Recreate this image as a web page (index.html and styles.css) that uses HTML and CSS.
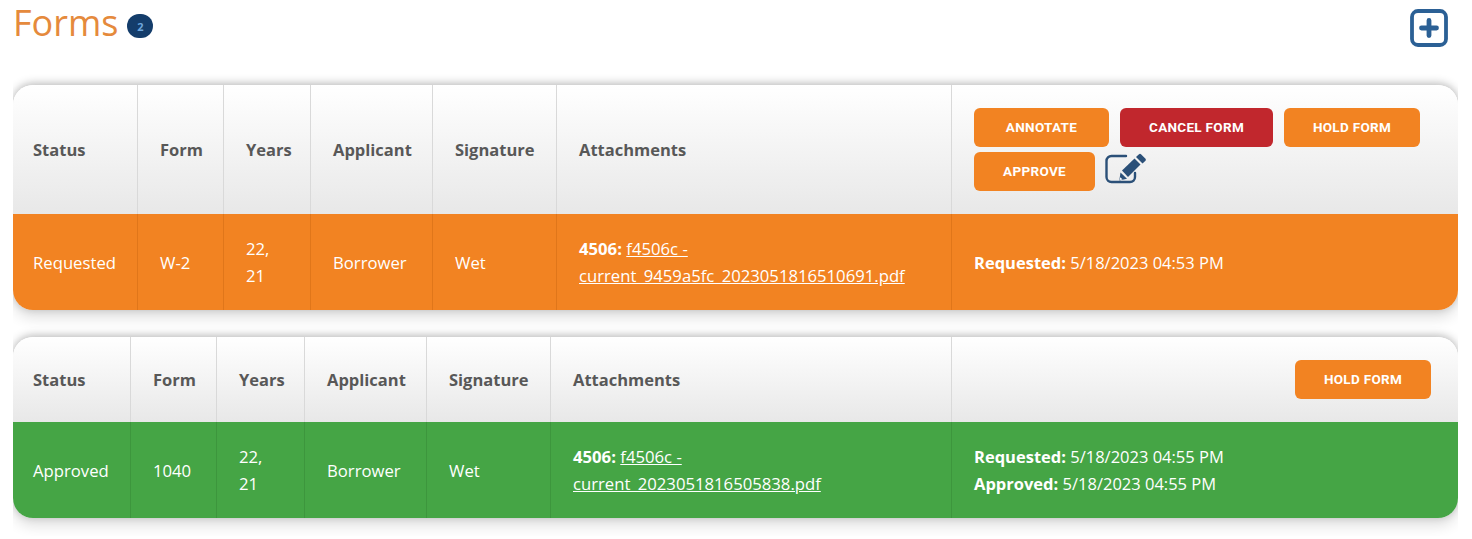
FILE: index.html
```html
<!DOCTYPE html>
<html lang="en">
<head>
<meta charset="utf-8">
<title>Forms</title>
<link rel="stylesheet" href="styles.css">
</head>
<body>
<header class="page-head">
  <h1 class="title">Forms</h1>
  <span class="count">2</span>
  <button class="add" aria-label="Add form">
    <svg viewBox="0 0 38 38" width="38" height="38"><rect x="2" y="2" width="34" height="34" rx="6" fill="none" stroke="#2b6095" stroke-width="3.800"/><path d="M19 11.500v15M11.500 19h15" stroke="#2b6095" stroke-width="4.800" stroke-linecap="round" fill="none"/></svg>
  </button>
</header>

<section class="card card-a">
  <div class="cell head first">Status</div>
  <div class="cell head">Form</div>
  <div class="cell head">Years</div>
  <div class="cell head">Applicant</div>
  <div class="cell head">Signature</div>
  <div class="cell head">Attachments</div>
  <div class="cell head actions">
    <button class="btn w-annotate">ANNOTATE</button>
    <button class="btn red w-cancel">CANCEL FORM</button>
    <button class="btn w-hold">HOLD FORM</button>
    <button class="btn w-approve">APPROVE</button>
    <svg class="edit" viewBox="0 0 42 34" width="42" height="34"><path d="M21 3H6.500A5 5 0 0 0 1.500 8v16A5 5 0 0 0 6.500 29h18.500a5 5 0 0 0 5-5v-4" fill="none" stroke="#2b5078" stroke-width="2.400" stroke-linecap="round"/><path d="M17 17.500 29.500 5.500l6 6L23 24z" fill="#2b5078"/><path d="M15.500 19.500l6.500 6.300-7.700 1.700z" fill="#2b5078"/><path d="M15.300 24.200l2.300 2.200-3 .7z" fill="#fff"/><path d="M31 4l3-2.800q1-.8 2 0l4.500 4.500q.8 1 0 2l-3 2.800z" fill="#2b5078"/></svg>
  </div>
  <div class="cell row orange first">Requested</div>
  <div class="cell row orange">W-2</div>
  <div class="cell row orange two">22,<br>21</div>
  <div class="cell row orange">Borrower</div>
  <div class="cell row orange">Wet</div>
  <div class="cell row orange two"><span><b>4506:</b> <a href="#">f4506c -</a><br><a href="#">current_9459a5fc_2023051816510691.pdf</a></span></div>
  <div class="cell row orange last"><span><b>Requested:</b> 5/18/2023 04:53 PM</span></div>
</section>

<section class="card card-b">
  <div class="cell head first">Status</div>
  <div class="cell head">Form</div>
  <div class="cell head">Years</div>
  <div class="cell head">Applicant</div>
  <div class="cell head">Signature</div>
  <div class="cell head">Attachments</div>
  <div class="cell head actions end">
    <button class="btn w-hold">HOLD FORM</button>
  </div>
  <div class="cell row green first">Approved</div>
  <div class="cell row green">1040</div>
  <div class="cell row green two">22,<br>21</div>
  <div class="cell row green">Borrower</div>
  <div class="cell row green">Wet</div>
  <div class="cell row green two"><span><b>4506:</b> <a href="#">f4506c -</a><br><a href="#">current_2023051816505838.pdf</a></span></div>
  <div class="cell row green last two"><span><b>Requested:</b> 5/18/2023 04:55 PM<br><b>Approved:</b> 5/18/2023 04:55 PM</span></div>
</section>
</body>
</html>
```

FILE: styles.css
```css
* { box-sizing: border-box; }
html, body { margin: 0; height: 539px; overflow: hidden; background: #fff; }
body { padding: 0 14px 0 13px; font-family: "Open Sans", sans-serif; color: #555; }

.page-head { display: flex; align-items: center; height: 85px; padding-bottom: 39px; }
.title { margin: 0; font-size: 36px; line-height: 48px; font-weight: 400; color: #e58a3c; }
.count { display: flex; align-items: center; justify-content: center; width: 26px; height: 24px; margin: 6px 0 0 9px; border-radius: 12px; background: #143d6b; color: #6ea6dc; font-size: 11px; font-weight: 700; }
.add { margin: 10px 10px 0 auto; padding: 0; border: 0; background: none; line-height: 0; }

.card { display: grid; border-radius: 20px; overflow: hidden; clip-path: inset(-14px 0 -18px 0); box-shadow: 0 -2px 8px rgba(0,0,0,.25), 0 8px 14px rgba(0,0,0,.12); }
.card-a { grid-template-columns: 125px 86px 87px 122px 124px 395px 1fr; grid-template-rows: 129px 96px; margin-bottom: 27px; }
.card-b { grid-template-columns: 118px 86px 88px 122px 124px 401px 1fr; grid-template-rows: 85px 96px; }

.cell { display: flex; align-items: center; padding: 1px 22px 0; border-right: 1px solid rgba(0,0,0,.1); line-height: 27px; }
.cell:nth-child(7n) { border-right: 0; }
.head { padding-top: 0; background: linear-gradient(#fff, #e8e8e8); color: #585858; font-weight: 700; font-size: 16.500px; border-right-color: #d9d9d9; }
.row { color: #fff; font-size: 16.700px; }
.two { padding-top: 0; }
.first { padding-left: 20px; }
.last { font-size: 16.500px; }
.orange { background: #f28322; border-right-color: #e0761a; }
.green { background: #45a545; border-right-color: #3d963d; }
.row a { color: #fff; text-decoration: underline; }
.row b { font-weight: 700; }

.actions { flex-wrap: wrap; align-content: center; gap: 5px 11px; padding: 0 22px; }
.actions.end { justify-content: flex-end; padding-right: 27px; }
.btn { height: 39px; padding: 0 0 1px; border: 0; border-radius: 6px; background: #f28322; color: #fff; font: 700 13.500px "Roboto", sans-serif; letter-spacing: .3px; }
.btn.red { background: #c1272d; }
.w-annotate { width: 135px; }
.w-cancel { width: 153px; }
.w-hold { width: 136px; }
.w-approve { width: 121px; }
.edit { align-self: flex-start; margin: 1px 0 0 -1px; }
```
